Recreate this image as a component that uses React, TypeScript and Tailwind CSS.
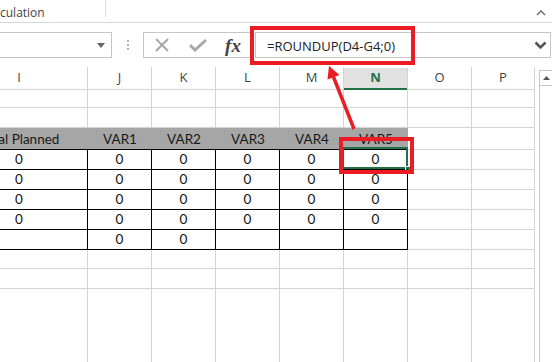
import React from "react";

const COLUMNS = ["I", "J", "K", "L", "M", "N", "O", "P"];
const GRID = "grid grid-cols-[137px_64px_64px_64px_64px_64px_64px_63px]";
const HEADINGS = ["Total Planned", "VAR1", "VAR2", "VAR3", "VAR4", "VAR5"];
const ROWS = [
  ["0", "0", "0", "0", "0", "0"],
  ["0", "0", "0", "0", "0", "0"],
  ["0", "0", "0", "0", "0", "0"],
  ["0", "0", "0", "0", "0", "0"],
  ["", "0", "0", "", "", ""],
];

const gridCell = "border-r border-b border-[#d4d4d4]";

const EmptyRow = () => (
  <div className={`${GRID} h-[20px]`}>
    {COLUMNS.map((col) => (
      <div key={col} className={gridCell} />
    ))}
  </div>
);

const Ribbon = () => (
  <div className="flex h-[23px] items-start border-b border-[#d5d5d5] bg-white">
    <div className="flex h-[17px] w-[106px] items-start border-r border-[#dcdcdc]">
      <span className="pt-[7px] text-[12px] leading-none text-[#444]">culation</span>
    </div>
    <div className="flex-1" />
    <svg width="10" height="6" viewBox="0 0 10 6" className="mr-[6px] mt-[10px]">
      <path d="M1 5 L5 1 L9 5" fill="none" stroke="#666" strokeWidth="1.3" />
    </svg>
  </div>
);

const FormulaBar = () => (
  <div className="flex h-[44px] items-start bg-white pt-[9px]">
    <div className="flex h-[26px] w-[112px] items-center justify-end border border-l-0 border-[#c6c6c6] pr-[6px]">
      <svg width="8" height="5" viewBox="0 0 8 5">
        <path d="M0 0 H8 L4 5 Z" fill="#666" />
      </svg>
    </div>
    <div className="flex h-[26px] w-[31px] flex-col items-center justify-center gap-[2px]">
      <span className="h-[2px] w-[2px] bg-[#b4b4b4]" />
      <span className="h-[2px] w-[2px] bg-[#b4b4b4]" />
      <span className="h-[2px] w-[2px] bg-[#b4b4b4]" />
    </div>
    <div className="flex h-[26px] w-[109px] items-center border border-[#c6c6c6]">
      <div className="flex w-[36px] justify-center">
        <svg width="16" height="16" viewBox="0 0 16 16">
          <path d="M2 2 L14 14 M14 2 L2 14" stroke="#a8a8a8" strokeWidth="2" />
        </svg>
      </div>
      <div className="flex w-[36px] justify-center">
        <svg width="18" height="14" viewBox="0 0 18 14">
          <path d="M1 7 L6 12 L17 2" fill="none" stroke="#a8a8a8" strokeWidth="3" />
        </svg>
      </div>
      <div className="flex w-[34px] justify-center">
        <span className="font-['Liberation_Serif',serif] text-[19px] font-bold italic leading-none text-[#444]">
          fx
        </span>
      </div>
    </div>
    <div className="ml-[3px] flex h-[26px] w-[296px] items-center justify-between border border-[#c6c6c6] pl-[11px] pr-[3px]">
      <span className="pt-[2px] font-['Open_Sans',sans-serif] text-[13px] leading-none text-[#222]">
        =ROUNDUP(D4-G4;0)
      </span>
      <svg width="13" height="9" viewBox="0 0 13 9">
        <path d="M1.5 1.5 L6.5 6.5 L11.5 1.5" fill="none" stroke="#555" strokeWidth="2.6" />
      </svg>
    </div>
  </div>
);

const ColumnHeaders = () => (
  <div className={`${GRID} h-[21px]`}>
    {COLUMNS.map((col) =>
      col === "N" ? (
        <div
          key={col}
          className="mt-[1px] flex items-center justify-center border-b-2 border-r border-[#217346] border-r-[#d4d4d4] bg-[#e1e1e1] font-['Open_Sans',sans-serif] text-[13px] font-bold text-[#217346]"
        >
          {col}
        </div>
      ) : (
        <div
          key={col}
          className="flex items-center justify-center border-b border-r border-[#d4d4d4] font-['Open_Sans',sans-serif] text-[13px] text-[#444]"
        >
          {col}
        </div>
      )
    )}
  </div>
);

const TableHeading = () => (
  <div className={`${GRID} h-[21px]`}>
    {COLUMNS.map((col, index) =>
      index < HEADINGS.length ? (
        <div
          key={col}
          className="flex items-center justify-center whitespace-nowrap border-b border-black bg-[#a6a6a6] pt-[1px] text-[#1a1a1a]"
        >
          {HEADINGS[index]}
        </div>
      ) : (
        <div key={col} className={gridCell} />
      )
    )}
  </div>
);

const DataRow = ({ values, rowIndex }: { values: string[]; rowIndex: number }) => (
  <div className={`${GRID} h-[20px]`}>
    {COLUMNS.map((col, index) =>
      index < values.length ? (
        <div
          key={col}
          className="relative flex items-center justify-center border-b border-r border-black text-[#111]"
        >
          {values[index]}
          {rowIndex === 0 && col === "N" && (
            <>
              <div className="absolute left-[-2px] top-[-2px] right-[-1px] bottom-0 border-2 border-[#217346]" />
              <div className="absolute bottom-[-3px] right-[-4px] h-[6px] w-[6px] border border-white bg-[#217346]" />
            </>
          )}
        </div>
      ) : (
        <div key={col} className={gridCell} />
      )
    )}
  </div>
);

const Sheet = () => (
  <div className="flex h-[295px]">
    <div className="w-[535px] overflow-hidden">
      <div className="ml-[-49px] flex h-full w-[584px] flex-col font-['Lato',sans-serif] text-[13.5px]">
        <ColumnHeaders />
        <EmptyRow />
        <EmptyRow />
        <TableHeading />
        {ROWS.map((values, rowIndex) => (
          <DataRow key={rowIndex} values={values} rowIndex={rowIndex} />
        ))}
        <EmptyRow />
        <EmptyRow />
        <div className={`${GRID} flex-1`}>
          {COLUMNS.map((col) => (
            <div key={col} className="border-r border-[#d4d4d4]" />
          ))}
        </div>
      </div>
    </div>
    <div className="flex w-[17px] flex-col pl-[4px] pt-[3px]">
      <div className="flex h-[16px] items-center justify-center border border-r-0 border-[#c6c6c6]">
        <svg width="7" height="4" viewBox="0 0 7 4">
          <path d="M0 4 L3.5 0 L7 4 Z" fill="#555" />
        </svg>
      </div>
      <div className="flex-1 border-l border-[#c6c6c6]" />
    </div>
  </div>
);

export default function App() {
  return (
    <div className="relative h-[362px] w-[552px] overflow-hidden bg-white font-['Open_Sans',sans-serif]">
      <Ribbon />
      <FormulaBar />
      <Sheet />

      <div className="pointer-events-none absolute left-[250px] top-[26px] h-[39px] w-[165px] border-[4px] border-[#ec1c24]" />
      <div className="pointer-events-none absolute left-[339px] top-[137px] h-[37px] w-[75px] border-[4px] border-[#ec1c24]" />
      <svg
        className="pointer-events-none absolute left-0 top-0"
        width="552"
        height="362"
        viewBox="0 0 552 362"
      >
        <line x1="354" y1="129" x2="333.5" y2="77" stroke="#ec1c24" strokeWidth="3.5" />
        <polygon points="329,66 339.5,75 327.5,79.5" fill="#ec1c24" />
      </svg>
    </div>
  );
}
